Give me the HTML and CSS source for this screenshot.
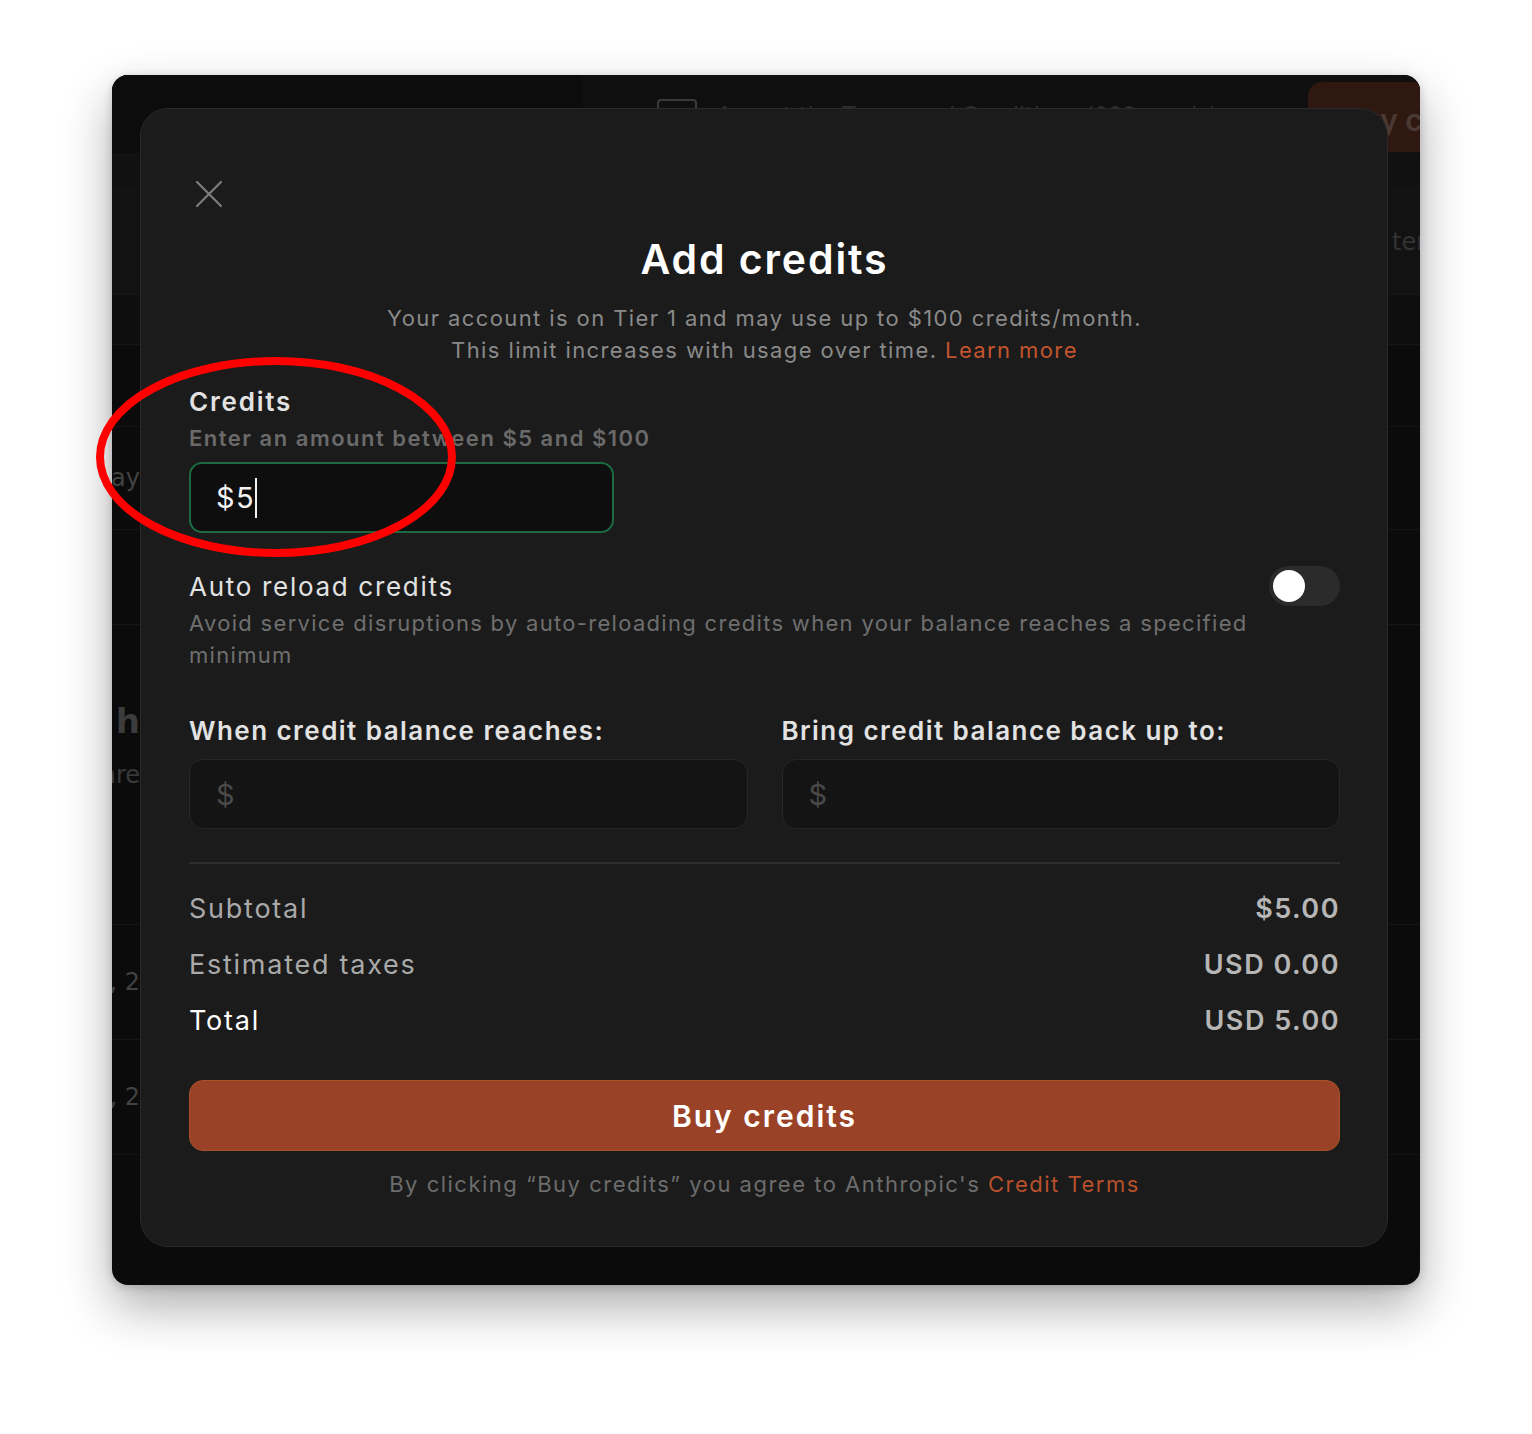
FILE: index.html
```html
<!DOCTYPE html>
<html lang="en">
<head>
<meta charset="utf-8">
<title>Add credits</title>
<link rel="stylesheet" href="styles.css">
</head>
<body>
<div class="window">
  <div class="backdrop">
    <div class="bd-header">
      <div class="bd-side"></div>
      <div class="bd-top">
        <span class="bd-check"></span>
        <span class="bd-top-text">Accept the Terms and Conditions (000 words)</span>
      </div>
      <div class="bd-buy">Buy credits</div>
    </div>
    <div class="bd-row h37"><span class="frag-l"></span><span class="frag-r"></span></div>
    <div class="bd-row h105"><span class="frag-l"></span><span class="frag-r">ter</span></div>
    <div class="bd-row h50"><span class="frag-l"></span><span class="frag-r"></span></div>
    <div class="bd-row h82"><span class="frag-l"></span><span class="frag-r"></span></div>
    <div class="bd-row h103"><span class="frag-l">ay</span><span class="frag-r"></span></div>
    <div class="bd-row h95"><span class="frag-l"></span><span class="frag-r"></span></div>
    <div class="bd-row h300 bd-block"><span class="frag-l"><b class="frag-big">e h</b><span class="frag-sub">are</span></span><span class="frag-r"></span></div>
    <div class="bd-row h115"><span class="frag-l">, 2</span><span class="frag-r"></span></div>
    <div class="bd-row h115"><span class="frag-l">, 2</span><span class="frag-r"></span></div>
  </div>

  <div class="modal">
    <button class="close" aria-label="Close">
      <svg width="28" height="28" viewBox="0 0 28 28"><path d="M2 2 L26 26 M26 2 L2 26" stroke="#7c7c7c" stroke-width="2.2" stroke-linecap="round" fill="none"/></svg>
    </button>
    <h1 class="title">Add credits</h1>
    <p class="subtitle">Your account is on Tier 1 and may use up to $100 credits/month.<br>This limit increases with usage over time. <a class="link" href="#">Learn more</a></p>

    <div class="credits">
      <div class="label">Credits</div>
      <div class="hint">Enter an amount between $5 and $100</div>
      <div class="amount-input"><span class="amount-val">$5</span><span class="caret"></span></div>
    </div>

    <div class="auto">
      <div class="auto-text">
        <div class="auto-label">Auto reload credits</div>
        <div class="auto-desc">Avoid service disruptions by auto-reloading credits when your balance reaches a specified minimum</div>
      </div>
      <div class="toggle"><span class="knob"></span></div>
    </div>

    <div class="reload-grid">
      <div class="reload-col">
        <div class="col-label">When credit balance reaches:</div>
        <div class="field"><span class="ph">$</span></div>
      </div>
      <div class="reload-col">
        <div class="col-label">Bring credit balance back up to:</div>
        <div class="field"><span class="ph">$</span></div>
      </div>
    </div>

    <div class="divider"></div>

    <div class="summary">
      <div class="sum-row"><span class="sum-key">Subtotal</span><span class="sum-val">$5.00</span></div>
      <div class="sum-row"><span class="sum-key">Estimated taxes</span><span class="sum-val">USD 0.00</span></div>
      <div class="sum-row"><span class="sum-key total">Total</span><span class="sum-val">USD 5.00</span></div>
    </div>

    <button class="buy">Buy credits</button>
    <p class="terms">By clicking “Buy credits” you agree to Anthropic's <a class="link" href="#">Credit Terms</a></p>
  </div>
</div>

<svg class="annotation" width="1532" height="1434" viewBox="0 0 1532 1434">
  <ellipse cx="276" cy="457" rx="176" ry="96" fill="none" stroke="#ff0000" stroke-width="8"/>
</svg>
</body>
</html>
```

FILE: styles.css
```css
* { box-sizing: border-box; }

html, body {
  margin: 0;
  padding: 0;
}

body {
  width: 1532px;
  height: 1434px;
  background: #ffffff;
  font-family: "Inter", "Noto Sans", sans-serif;
  position: relative;
  overflow: hidden;
  padding-top: 75px;
  padding-left: 112px;
}

.window {
  position: relative;
  width: 1308px;
  height: 1210px;
  background: #0b0b0b;
  border-radius: 16px;
  overflow: hidden;
  box-shadow: 0 22px 50px rgba(0, 0, 0, 0.32), 0 2px 10px rgba(0, 0, 0, 0.18);
}

/* ---------- backdrop page ---------- */
.backdrop {
  display: flex;
  flex-direction: column;
  color: #3f3f3f;
  font-family: "DejaVu Sans", sans-serif;
}

.bd-header {
  height: 78px;
  display: flex;
  align-items: flex-start;
  background: #0f0f0f;
}

.bd-side {
  width: 470px;
  height: 78px;
  background: #0c0c0c;
}

.bd-top {
  flex: 1;
  display: flex;
  align-items: center;
  gap: 20px;
  padding: 24px 0 0 75px;
  font-size: 22px;
  color: #2e2e2e;
}

.bd-check {
  width: 40px;
  height: 30px;
  border: 2px solid #3a3a3a;
  border-radius: 4px;
}

.bd-buy {
  width: 114px;
  height: 70px;
  margin: 7px -2px 0 0;
  background: #2e1810;
  border-radius: 14px 0 0 14px;
  color: #4a3a33;
  font-size: 30px;
  font-family: "Inter", sans-serif;
  font-weight: 600;
  padding: 20px 0 0 34px;
  white-space: nowrap;
  overflow: hidden;
}

.bd-row {
  display: flex;
  justify-content: space-between;
  border-bottom: 1px solid #151515;
  background: #0b0b0b;
}

.h37 { height: 37px; background: #111111; }
.h105 { height: 105px; background: #121212; }
.h50 { height: 50px; background: #0e0e0e; }
.h82 { height: 82px; }
.h103 { height: 103px; }
.h95 { height: 95px; }
.h300 { height: 300px; }
.h115 { height: 115px; }

.frag-l {
  width: 28px;
  overflow: hidden;
  white-space: nowrap;
  font-size: 24px;
  display: flex;
  flex-direction: column;
  align-items: flex-end;
  justify-content: center;
  color: #424242;
}

.frag-r {
  width: 32px;
  overflow: hidden;
  white-space: nowrap;
  font-size: 24px;
  display: flex;
  align-items: center;
  padding-left: 4px;
  color: #333333;
}

.bd-block .frag-l {
  justify-content: flex-start;
  padding-top: 76px;
}

.frag-big {
  font-size: 34px;
  color: #3c3c3c;
  line-height: 40px;
}

.frag-sub {
  font-size: 24px;
  margin-top: 20px;
  color: #3a3a3a;
}

/* ---------- modal ---------- */
.modal {
  position: absolute;
  left: 28px;
  top: 33px;
  width: 1248px;
  height: 1139px;
  background: #1b1b1b;
  border: 1px solid #2a2a2a;
  border-radius: 28px;
  padding: 71px 47px 0 48px;
  color: #e6e6e6;
}

.close {
  display: block;
  width: 28px;
  height: 28px;
  padding: 0;
  margin: 0 0 0 6px;
  border: 0;
  background: none;
  cursor: pointer;
}

.close svg { display: block; }

.title {
  margin: 27px 0 0;
  font-size: 41px;
  line-height: 48px;
  font-weight: 600;
  color: #ffffff;
  text-align: center;
  letter-spacing: 1.9px;
}

.subtitle {
  margin: 19px 0 0;
  font-size: 22px;
  line-height: 32px;
  color: #8a8a8a;
  text-align: center;
  letter-spacing: 1.4px;
}

.link {
  color: #c4542f;
  text-decoration: none;
}

.credits { margin-top: 18px; }

.label {
  font-size: 26px;
  line-height: 36px;
  font-weight: 600;
  color: #e2e2e2;
  letter-spacing: 1.8px;
}

.hint {
  margin-top: 2px;
  font-size: 22px;
  line-height: 32px;
  font-weight: 600;
  color: #6a6a6a;
  letter-spacing: 1.5px;
}

.amount-input {
  margin-top: 8px;
  width: 425px;
  height: 71px;
  background: #0e0e0e;
  border: 2px solid #1d6a40;
  border-radius: 13px;
  display: flex;
  align-items: center;
  padding-left: 25px;
}

.amount-val {
  font-size: 29px;
  color: #f2f2f2;
  letter-spacing: 1.5px;
}

.caret {
  width: 2px;
  height: 40px;
  background: #f2f2f2;
  margin-left: 0;
}

.auto {
  margin-top: 36px;
  display: flex;
  justify-content: space-between;
  align-items: flex-start;
  gap: 8px;
}

.auto-text { flex: 1; }

.auto-label {
  font-size: 26px;
  line-height: 36px;
  color: #e2e2e2;
  letter-spacing: 1.7px;
}

.auto-desc {
  margin-top: 2px;
  font-size: 22px;
  line-height: 32px;
  color: #6f6f6f;
  letter-spacing: 1.3px;
}

.toggle {
  flex: none;
  margin-top: -3px;
  width: 71px;
  height: 40px;
  border-radius: 20px;
  background: #2b2b2b;
  padding: 4px;
}

.knob {
  display: block;
  width: 32px;
  height: 32px;
  border-radius: 50%;
  background: #ffffff;
}

.reload-grid {
  margin-top: 42px;
  display: grid;
  grid-template-columns: 1fr 1fr;
  column-gap: 34px;
}

.col-label {
  font-size: 26px;
  line-height: 36px;
  font-weight: 600;
  color: #e2e2e2;
  letter-spacing: 1.45px;
}

.field {
  margin-top: 10px;
  height: 70px;
  background: #141414;
  border: 1.5px solid #272727;
  border-radius: 14px;
  display: flex;
  align-items: center;
  padding-left: 26px;
}

.ph {
  font-size: 29px;
  color: #4a4a4a;
}

.divider {
  margin-top: 33px;
  height: 2px;
  background: #2e2e2e;
}

.summary {
  margin-top: 16px;
  display: flex;
  flex-direction: column;
}

.sum-row {
  height: 56px;
  display: flex;
  align-items: center;
  justify-content: space-between;
}

.sum-key {
  font-size: 27px;
  color: #a9a9a9;
  letter-spacing: 1.75px;
}

.sum-key.total { color: #ffffff; }

.sum-val {
  font-size: 27px;
  font-weight: 600;
  color: #b6b6b6;
  letter-spacing: 1.5px;
}

.buy {
  display: block;
  width: 100%;
  margin-top: 32px;
  height: 71px;
  border: 1px solid #a8532a;
  border-radius: 14px;
  background: #9a4227;
  color: #ffffff;
  font-family: "Inter", "Noto Sans", sans-serif;
  font-size: 30px;
  font-weight: 600;
  letter-spacing: 2px;
  cursor: pointer;
}

.terms {
  margin: 17px 0 0;
  font-size: 22px;
  line-height: 32px;
  color: #6c6c6c;
  text-align: center;
  letter-spacing: 1.5px;
}

.terms .link { color: #b8502c; }

/* ---------- annotation ---------- */
.annotation {
  position: absolute;
  left: 0;
  top: 0;
  pointer-events: none;
}
```
